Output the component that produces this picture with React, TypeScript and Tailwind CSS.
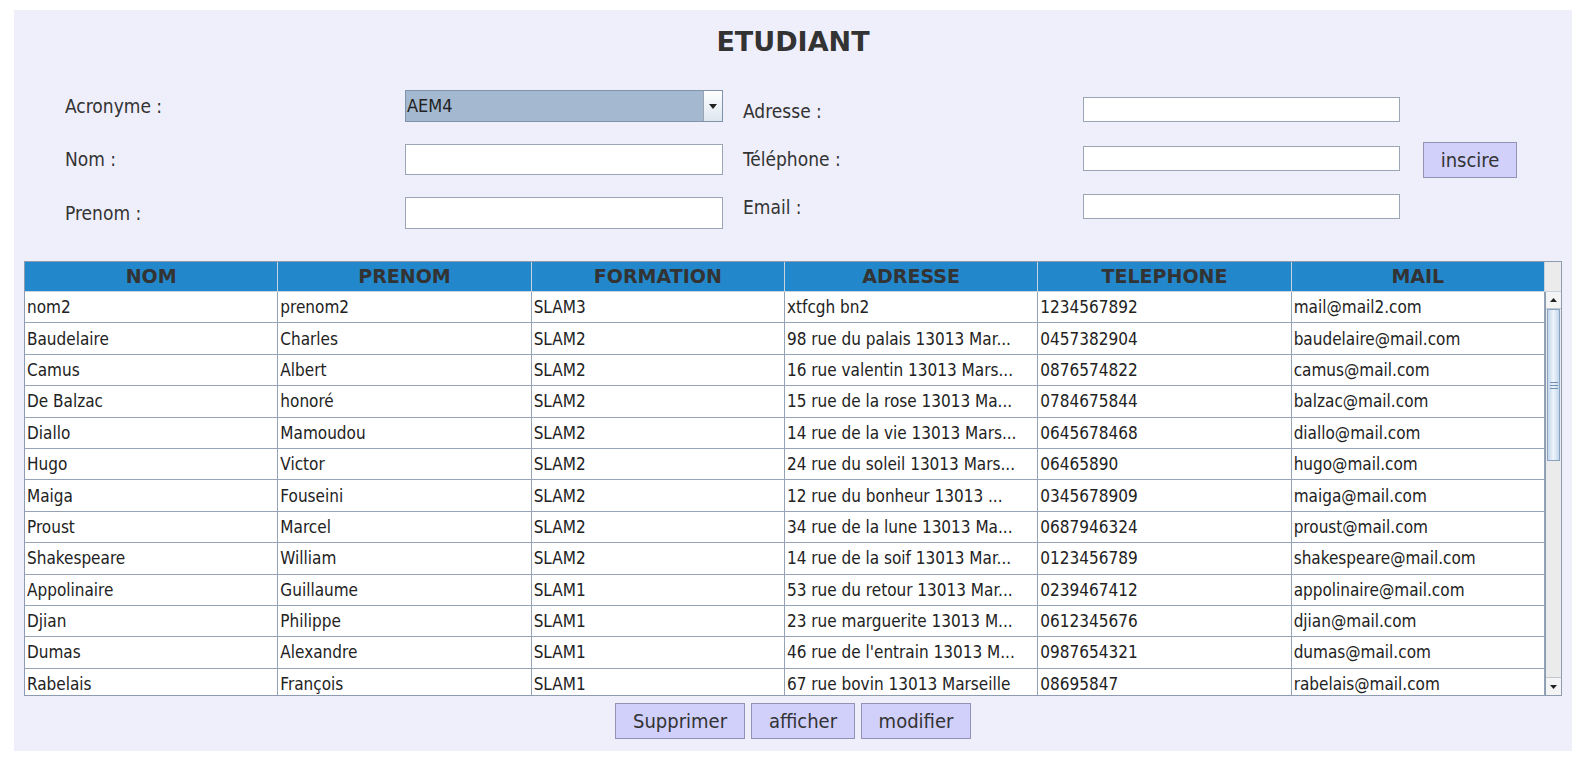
import React from "react";

const rows: string[][] = [
  ["nom2", "prenom2", "SLAM3", "xtfcgh bn2", "1234567892", "mail@mail2.com"],
  ["Baudelaire", "Charles", "SLAM2", "98 rue du palais 13013 Mar...", "0457382904", "baudelaire@mail.com"],
  ["Camus", "Albert", "SLAM2", "16 rue valentin 13013 Mars...", "0876574822", "camus@mail.com"],
  ["De Balzac", "honoré", "SLAM2", "15 rue de la rose 13013 Ma...", "0784675844", "balzac@mail.com"],
  ["Diallo", "Mamoudou", "SLAM2", "14 rue de la vie 13013 Mars...", "0645678468", "diallo@mail.com"],
  ["Hugo", "Victor", "SLAM2", "24 rue du soleil 13013 Mars...", "06465890", "hugo@mail.com"],
  ["Maiga", "Fouseini", "SLAM2", "12 rue du bonheur 13013 ...", "0345678909", "maiga@mail.com"],
  ["Proust", "Marcel", "SLAM2", "34 rue de la lune 13013 Ma...", "0687946324", "proust@mail.com"],
  ["Shakespeare", "William", "SLAM2", "14 rue de la soif 13013 Mar...", "0123456789", "shakespeare@mail.com"],
  ["Appolinaire", "Guillaume", "SLAM1", "53 rue du retour 13013 Mar...", "0239467412", "appolinaire@mail.com"],
  ["Djian", "Philippe", "SLAM1", "23 rue marguerite  13013 M...", "0612345676", "djian@mail.com"],
  ["Dumas", "Alexandre", "SLAM1", "46 rue de l'entrain 13013 M...", "0987654321", "dumas@mail.com"],
  ["Rabelais", "François", "SLAM1", "67 rue bovin 13013 Marseille", "08695847", "rabelais@mail.com"],
];

const headers = ["NOM", "PRENOM", "FORMATION", "ADRESSE", "TELEPHONE", "MAIL"];

const font = { fontFamily: '"DejaVu Sans Condensed", "DejaVu Sans", sans-serif' };

function Field({ w, h }: { w: string; h: string }) {
  return <div className={`${w} ${h} bg-white border border-[#9aa6b6]`} />;
}

export default function App() {
  return (
    <div className="w-full h-[762px] bg-white pt-[10px] px-[14px]" style={font}>
      <div className="h-[741px] bg-[#efeffc] flex flex-col">
        <div className="pt-[26px] h-[58px] flex justify-center">
          <h1
            className="text-[27px] leading-[32px] font-bold text-[#333333] -mt-[10px]"
            style={{ fontFamily: '"DejaVu Sans", sans-serif' }}
          >
            ETUDIANT
          </h1>
        </div>

        {/* Form */}
        <div className="flex mt-[22px] h-[139px] text-[19px] text-[#333333]">
          {/* left */}
          <div className="flex flex-col pl-[51px] w-[729px]">
            <div className="flex items-center h-[32px]">
              <span className="w-[340px]">Acronyme :</span>
              <div className="w-[318px] h-[32px] bg-[#a4b9d0] border border-[#7f93ab] flex">
                <span className="flex-1 pl-[1px] leading-[30px] text-[#222] text-[18px]">AEM4</span>
                <div className="w-[19px] h-full border-l border-[#9aa6b6] bg-gradient-to-b from-white to-[#dde6ef] flex items-center justify-center">
                  <svg width="8" height="5" viewBox="0 0 8 5">
                    <path d="M0 0 L8 0 L4 5 Z" fill="#222" />
                  </svg>
                </div>
              </div>
            </div>
            <div className="flex items-center h-[31px] mt-[22px]">
              <span className="w-[340px]">Nom :</span>
              <Field w="w-[318px]" h="h-[31px]" />
            </div>
            <div className="flex items-center h-[32px] mt-[22px]">
              <span className="w-[340px]">Prenom :</span>
              <Field w="w-[318px]" h="h-[32px]" />
            </div>
          </div>
          {/* right */}
          <div className="flex flex-col pt-[7px] w-[657px]">
            <div className="flex items-center h-[25px]">
              <span className="w-[340px] mt-[3px]">Adresse :</span>
              <Field w="w-[317px]" h="h-[25px]" />
            </div>
            <div className="flex items-center h-[25px] mt-[24px]">
              <span className="w-[340px] mt-[1px]">Téléphone :</span>
              <Field w="w-[317px]" h="h-[25px]" />
            </div>
            <div className="flex items-center h-[25px] mt-[23px]">
              <span className="w-[340px] mt-[2px]">Email :</span>
              <Field w="w-[317px]" h="h-[25px]" />
            </div>
          </div>
          <div className="pt-[52px] pl-[23px]">
            <button className="w-[94px] h-[36px] bg-[#d0d0fb] border border-[#9292b4] text-[20px] text-[#333] leading-none">
              inscire
            </button>
          </div>
        </div>

        {/* Table */}
        <div className="mx-[10px] mt-[32px] h-[435px] border border-[#8d9cb0] bg-white flex flex-col overflow-hidden">
          <div className="flex h-[30px] shrink-0">
            <div className="flex-1 grid grid-cols-6 bg-[#2388cb]">
              {headers.map((h) => (
                <div
                  key={h}
                  className="border-r border-b border-[#c9d3de] flex items-center justify-center font-bold text-[19px] text-[#333333] leading-none"
                  style={{ fontFamily: '"DejaVu Sans", sans-serif' }}
                >
                  {h}
                </div>
              ))}
            </div>
            <div className="w-[16px] bg-[#ebebeb] border-b border-[#c9d3de]" />
          </div>
          <div className="flex flex-1 min-h-0">
            <div className="flex-1 overflow-hidden">
              {rows.map((r, i) => (
                <div key={i} className="grid grid-cols-6 h-[31.4px] border-b border-[#94a3b6]">
                  {r.map((c, j) => (
                    <div
                      key={j}
                      className="border-r border-[#94a3b6] pl-[2px] pt-[1px] flex items-center text-[17px] text-[#222] whitespace-nowrap overflow-hidden leading-none"
                    >
                      {c}
                    </div>
                  ))}
                </div>
              ))}
            </div>
            {/* scrollbar */}
            <div className="w-[16px] bg-[#ebebeb] flex flex-col border-l border-[#8d9cb0]">
              <div className="h-[17px] flex items-center justify-center border-b border-[#c0c8d2] bg-[#f4f4f4]">
                <svg width="7" height="4" viewBox="0 0 7 4">
                  <path d="M0 4 L7 4 L3.5 0 Z" fill="#222" />
                </svg>
              </div>
              <div className="h-[152px] mx-[1px] bg-gradient-to-r from-[#c3d6ea] via-[#eef4fb] to-[#c3d6ea] border border-[#8aa3c0] flex items-center justify-center">
                <div className="flex flex-col gap-[2px]">
                  <div className="w-[8px] h-px bg-[#6f8db3]" />
                  <div className="w-[8px] h-px bg-[#6f8db3]" />
                  <div className="w-[8px] h-px bg-[#6f8db3]" />
                </div>
              </div>
              <div className="flex-1" />
              <div className="h-[18px] flex items-center justify-center border-t border-[#c0c8d2] bg-[#f4f4f4]">
                <svg width="7" height="4" viewBox="0 0 7 4">
                  <path d="M0 0 L7 0 L3.5 4 Z" fill="#222" />
                </svg>
              </div>
            </div>
          </div>
        </div>

        {/* Buttons */}
        <div className="flex justify-center gap-[6px] mt-[7px]">
          <button className="w-[130px] h-[36px] bg-[#d0d0fb] border border-[#9292b4] text-[20px] text-[#333] leading-none">
            Supprimer
          </button>
          <button className="w-[104px] h-[36px] bg-[#d0d0fb] border border-[#9292b4] text-[20px] text-[#333] leading-none">
            afficher
          </button>
          <button className="w-[110px] h-[36px] bg-[#d0d0fb] border border-[#9292b4] text-[20px] text-[#333] leading-none">
            modifier
          </button>
        </div>
      </div>
    </div>
  );
}
